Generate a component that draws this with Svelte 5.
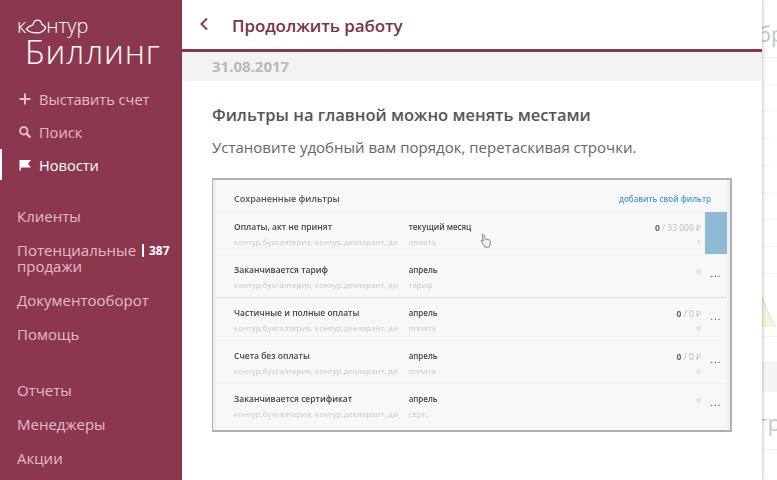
<script>
  const topNav = [
    { label: 'Выставить счет', icon: 'plus' },
    { label: 'Поиск', icon: 'search' },
    { label: 'Новости', icon: 'flag', active: true }
  ];
  const midNav = ['Клиенты', 'Потенциальные продажи', 'Документооборот', 'Помощь'];
  const lowNav = ['Отчеты', 'Менеджеры', 'Акции'];

  const products = 'контур.бухгалтерия, контур.декларант, ди';
  const filters = [
    { name: 'Оплаты, акт не принят', period: 'текущий месяц', kind: 'оплата', done: '0', total: '33 000 ₽', count: '1', hover: true },
    { name: 'Заканчивается тариф', period: 'апрель', kind: 'тариф', count: '0', split: true },
    { name: 'Частичные и полные оплаты', period: 'апрель', kind: 'оплата', done: '0', total: '0 ₽', count: '0' },
    { name: 'Счета без оплаты', period: 'апрель', kind: 'оплата', done: '0', total: '0 ₽', count: '0' },
    { name: 'Заканчивается сертификат', period: 'апрель', kind: 'серт.', count: '0' }
  ];
  const gridLines = Array(8);
</script>

<div class="page">
  <aside class="sidebar">
    <div class="logo">
      <div class="brand">
        <span>к</span>
        <svg class="cloud" width="22" height="15" viewBox="0 0 20 14" fill="none" stroke="#fff" stroke-width="1.2">
          <path d="M1 9.5 C3 6.5 5.5 6 7 5.5 C7.8 2.5 9.5 1 11.5 1 C13.5 1 15 2.5 15.5 5 C17 5.5 18.4 6.5 19 8 C17.8 11 15.5 13 11 13 C6.5 13 3 12 1 9.5 Z" />
        </svg>
        <span>нтур</span>
      </div>
      <div class="product">Биллинг</div>
    </div>

    <nav class="nav top">
      {#each topNav as item}
        <a class="item" class:active={item.active} href="#top">
          <svg class="icon" width="14" height="14" viewBox="0 0 14 14">
            {#if item.icon === 'plus'}
              <path d="M6 1.500h2v4.500h4.500v2H8v4.500H6V8H1.500V6H6z" fill="currentColor" />
            {:else if item.icon === 'search'}
              <circle cx="5.800" cy="5.800" r="3.700" fill="none" stroke="currentColor" stroke-width="2" />
              <path d="M8.600 8.600l3.700 3.700" stroke="currentColor" stroke-width="2.400" />
            {:else}
              <path d="M1.500 2h11.500l-3 3.700 3 3.800H3v3H1.500z" fill="currentColor" />
            {/if}
          </svg>
          {item.label}
        </a>
      {/each}
    </nav>

    <nav class="nav mid">
      {#each midNav as label}
        <a class="item plain" class:double={label.includes(' ')} href="#top">
          {label}
          {#if label.includes(' ')}
            <span class="badge">387</span>
          {/if}
        </a>
      {/each}
    </nav>

    <nav class="nav low">
      {#each lowNav as label}
        <a class="item plain" href="#top">{label}</a>
      {/each}
    </nav>
  </aside>

  <main class="panel">
    <header class="head">
      <svg class="back" width="10" height="14" viewBox="0 0 10 14" fill="none" stroke="#8b384e" stroke-width="2">
        <path d="M8 1.500L2.500 7 8 12.500" />
      </svg>
      <h1>Продолжить работу</h1>
    </header>
    <div class="date">31.08.2017</div>
    <article class="news">
      <h2>Фильтры на главной можно менять местами</h2>
      <p>Установите удобный вам порядок, перетаскивая строчки.</p>

      <div class="shot">
        <div class="shot-inner">
          <div class="shot-head">
            <span>Сохраненные фильтры</span>
            <span class="add">добавить свой фильтр</span>
          </div>
          {#each filters as f}
            <div class="row" class:split={f.split}>
              <div class="col-name">
                <div class="name">{f.name}</div>
                <div class="sub">{products}</div>
              </div>
              <div class="col-period">
                <div class="name">{f.period}</div>
                <div class="sub">{f.kind}</div>
              </div>
              <div class="col-sum">
                {#if f.done}
                  <div class="sum"><b>{f.done}</b> / {f.total}</div>
                {/if}
                <div class="sub num">{f.count}</div>
              </div>
              {#if f.hover}
                <div class="more selected">...</div>
                <svg class="hand" width="12" height="16" viewBox="0 0 11 15" fill="#eee" stroke="#777" stroke-width="0.800">
                  <path d="M2 1.500c.8-.6 1.500-.2 1.700.5l1 3.500 3.300.8c1.300.4 1.700 1.100 1.600 2.200l-.3 2.500c-.1.900-.5 1.500-1 2.300H4.500L2.800 10.500 1 7.700c-.4-.8.300-1.400 1-1l1 .8z" />
                </svg>
              {:else}
                <div class="more">...</div>
              {/if}
            </div>
          {/each}
        </div>
      </div>
    </article>
  </main>

  <div class="behind">
    <div class="ghost first">бр</div>
    {#each gridLines as _}
      <div class="grid-line"></div>
    {/each}
    <svg class="wedge" width="15" height="31" viewBox="0 0 15 31">
      <path d="M0 0C4 12 9 24 14 31H0z" fill="#f4f6dc" />
      <path d="M0 0C4 12 9 24 14 31" fill="none" stroke="#cfe4dc" />
    </svg>
    <div class="axis"></div>
    <div class="band"></div>
    <div class="ghost second">гр</div>
  </div>
</div>

<style>
  :global(body) {
    margin: 0;
    font-family: "Open Sans", "Liberation Sans", sans-serif;
  }

  .page {
    display: flex;
    width: 777px;
    height: 480px;
    overflow: hidden;
    background: #fff;
  }

  .sidebar {
    flex: 0 0 182px;
    background: #8b384e;
    color: #e3bcc8;
    font-size: 15px;
    overflow: hidden;
  }

  .logo {
    padding: 15px 0 0 17px;
    color: #fff;
  }

  .brand {
    display: flex;
    align-items: flex-end;
    height: 22px;
    font-size: 20px;
    font-weight: 300;
    line-height: 22px;
  }

  .cloud {
    margin: 0 -1px 3px -1px;
  }

  .product {
    margin-left: 8px;
    font-size: 33px;
    font-weight: 300;
    line-height: 30px;
    letter-spacing: 0.9px;
  }

  .nav {
    display: flex;
    flex-direction: column;
  }

  .top {
    margin-top: 16px;
    gap: 2px;
    font-size: 14.600px;
  }

  .mid {
    margin-top: 19px;
  }

  .low {
    margin-top: 22px;
  }

  .item {
    display: flex;
    align-items: center;
    height: 31px;
    padding-left: 18px;
    color: inherit;
    text-decoration: none;
    line-height: 16px;
  }

  .item.active {
    color: #fff;
    box-shadow: inset 2px 0 0 #fff;
  }

  .plain {
    height: 34px;
    padding-left: 17px;
  }

  .double {
    display: block;
    position: relative;
    height: auto;
    width: 125px;
    padding: 9px 0 9px 17px;
  }

  .badge {
    position: absolute;
    left: 142px;
    top: 9px;
    padding-left: 5px;
    border-left: 2px solid #fff;
    color: #fff;
    font-size: 12px;
    font-weight: 700;
    line-height: 13px;
    margin-top: 2px;
  }

  .icon {
    margin-right: 7px;
  }

  .panel {
    flex: 0 0 580px;
    position: relative;
    z-index: 1;
    box-shadow: 1px 0 3px rgba(0, 0, 0, 0.22);
    background: #fff;
  }

  .head {
    display: flex;
    align-items: center;
    padding-left: 17px;
    border-bottom: 3px solid #8b384e;
    box-sizing: border-box;
    height: 52px;
  }

  .back {
    margin-right: 23px;
    margin-top: -2px;
  }

  h1 {
    margin: 1px 0 0;
    color: #7d3346;
    font-size: 17px;
    font-weight: 600;
    letter-spacing: -0.1px;
  }

  .date {
    height: 29px;
    padding-left: 30px;
    background: #f3f3f3;
    color: #b9b9b9;
    font-size: 15px;
    font-weight: 700;
    line-height: 28px;
  }

  .news {
    padding: 23px 30px 0;
  }

  h2 {
    margin: 0;
    color: #555;
    font-size: 16.500px;
    font-weight: 600;
    line-height: 22px;
  }

  p {
    margin: 11px 0 0;
    color: #666;
    font-size: 15px;
    line-height: 20px;
  }

  .shot {
    width: 520px;
    height: 254px;
    margin-top: 21px;
    box-sizing: border-box;
    border-style: solid;
    border-width: 2px 2px 2px 1px;
    border-color: #b0b0b0;
    background: #efefef;
    overflow: hidden;
  }

  .shot-inner {
    margin: 0 3px;
    background: #f8f8f8;
    height: 100%;
    filter: blur(0.5px);
    font-size: 8.500px;
  }

  .shot-head {
    display: flex;
    justify-content: space-between;
    align-items: center;
    height: 32px;
    box-sizing: border-box;
    padding: 6px 16px 0 18px;
    border-bottom: 1px solid #f0f0f0;
    color: #555;
    font-size: 9px;
    font-weight: 600;
  }

  .add {
    color: #4a9bd8;
    font-size: 8px;
  }

  .row {
    display: flex;
    position: relative;
    height: 43px;
    box-sizing: border-box;
    padding-left: 18px;
    border-bottom: 1px solid #f1f1f1;
  }

  .split {
    border-bottom-color: #ddd;
  }

  .col-name {
    width: 175px;
    padding-top: 9px;
    white-space: nowrap;
  }

  .col-period {
    width: 119px;
    padding-top: 9px;
    font-size: 8px;
  }

  .col-sum {
    width: 174px;
    padding-top: 10px;
    text-align: right;
    color: #bbb;
  }

  .name {
    height: 15px;
    color: #444;
    font-weight: 600;
    line-height: 12px;
  }

  .sub {
    color: #c9c9c9;
    font-size: 8px;
    line-height: 12px;
  }

  .sum {
    height: 14px;
    line-height: 12px;
  }

  .sum b {
    color: #666;
  }

  .more {
    width: 22px;
    margin-left: 4px;
    padding-top: 12px;
    text-align: center;
    color: #555;
    font-size: 9px;
    font-weight: 600;
    letter-spacing: 1.200px;
  }

  .more.selected {
    background: #8fbad6;
    color: #8fbad6;
  }

  .hand {
    position: absolute;
    left: 264px;
    top: 21px;
  }

  .behind {
    flex: 1;
    min-width: 0;
    overflow: hidden;
    color: #c4c8d0;
    font-size: 22px;
    white-space: nowrap;
  }

  .ghost {
    margin-left: -4px;
    line-height: 26px;
  }

  .first {
    height: 37px;
    padding-top: 20px;
    border-bottom: 1px solid #f1f1f1;
  }

  .grid-line {
    height: 26px;
    border-bottom: 1px solid #f6f6f6;
  }

  .wedge {
    display: block;
    margin-top: 22px;
  }

  .axis {
    height: 9px;
    border-bottom: 1px solid #f3f3f3;
  }

  .band {
    height: 30px;
    margin-top: 25px;
    background: #f5f5f5;
  }

  .second {
    height: 40px;
    padding-top: 17px;
    border-bottom: 1px solid #f1f1f1;
  }
</style>
